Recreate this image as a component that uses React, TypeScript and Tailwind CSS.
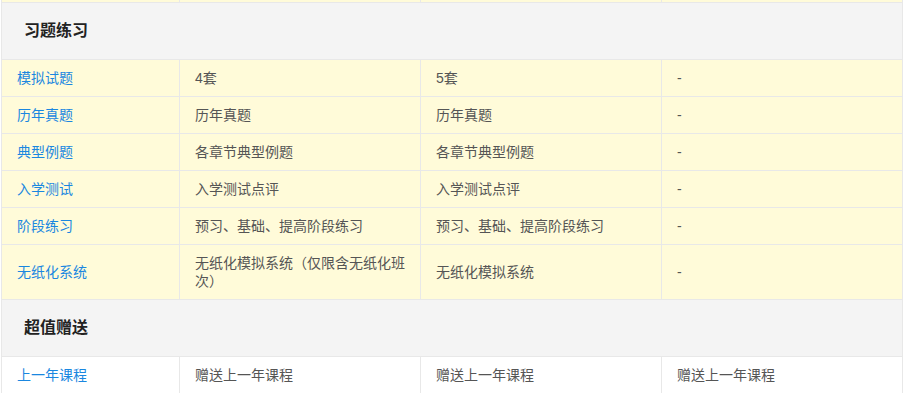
const font = "font-['Liberation_Sans','Noto_Sans_CJK_SC',sans-serif]";

type Row = { name: string; cells: string[] };

const practice: Row[] = [
  { name: "模拟试题", cells: ["4套", "5套", "-"] },
  { name: "历年真题", cells: ["历年真题", "历年真题", "-"] },
  { name: "典型例题", cells: ["各章节典型例题", "各章节典型例题", "-"] },
  { name: "入学测试", cells: ["入学测试点评", "入学测试点评", "-"] },
  { name: "阶段练习", cells: ["预习、基础、提高阶段练习", "预习、基础、提高阶段练习", "-"] },
  { name: "无纸化系统", cells: ["无纸化模拟系统（仅限含无纸化班次）", "无纸化模拟系统", "-"] },
];

const gifts: Row[] = [
  { name: "上一年课程", cells: ["赠送上一年课程", "赠送上一年课程", "赠送上一年课程"] },
];

function SectionHeader({ title }: { title: string }) {
  return (
    <div className="col-span-4 h-[56px] bg-[#f4f4f4] flex items-center pl-[22px] text-[16px] font-bold text-[#222]">
      {title}
    </div>
  );
}

function DataRow({ row, bg }: { row: Row; bg: string }) {
  return (
    <>
      <div className={`${bg} flex items-center px-[15px] py-[9px] leading-[18px] text-[#1a87e0]`}>
        {row.name}
      </div>
      {row.cells.map((c, i) => (
        <div key={i} className={`${bg} flex items-center px-[15px] py-[9px] leading-[18px] text-[#555]`}>
          {c}
        </div>
      ))}
    </>
  );
}

export default function App() {
  return (
    <div className={`min-h-screen bg-white ${font} text-[14px]`}>
      <div className="ml-px w-[902px] grid grid-cols-[177px_240px_240px_240px] gap-px bg-[#e8e8e8] border-x border-[#e8e8e8]">
        {/* tail of previous row */}
        <div className="h-[2px] bg-[#fffbd9]" />
        <div className="h-[2px] bg-[#fffbd9]" />
        <div className="h-[2px] bg-[#fffbd9]" />
        <div className="h-[2px] bg-[#fffbd9]" />

        <SectionHeader title="习题练习" />
        {practice.map((r) => (
          <DataRow key={r.name} row={r} bg="bg-[#fffbd9]" />
        ))}

        <SectionHeader title="超值赠送" />
        {gifts.map((r) => (
          <DataRow key={r.name} row={r} bg="bg-white" />
        ))}
      </div>
    </div>
  );
}
